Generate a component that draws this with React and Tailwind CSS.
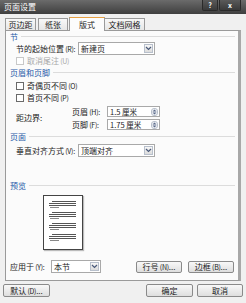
const Chevron = () => (
  <svg width="7" height="5" viewBox="0 0 7 5">
    <path d="M1 1 L3.5 3.5 L6 1" stroke="#4a5a7a" strokeWidth="1.2" fill="none" />
  </svg>
);

// chinese label + small latin access key
const Label = ({ text, keyName, colon = false }) => (
  <span className="whitespace-nowrap">
    {text}
    <span className="text-[7px] tracking-[-0.3px]"> ({keyName}){colon ? ":" : ""}</span>
  </span>
);

const Select = ({ value, width }) => (
  <div className={`flex h-[13px] shrink-0 items-center border border-[#a9a9a9] bg-white ${width}`}>
    <span className="flex-1 whitespace-nowrap pl-[2px]">{value}</span>
    <span className="m-[1px] flex h-[9px] w-[9px] items-center justify-center border border-[#b8c0cc] bg-gradient-to-b from-[#f7f7f7] to-[#dcdcdc]">
      <Chevron />
    </span>
  </div>
);

const Spin = ({ value }) => (
  <div className="flex h-[11px] w-[53px] shrink-0 items-center border border-[#a9a9a9] bg-white">
    <span className="flex-1 whitespace-nowrap pl-[2px] text-[7.5px]">{value}</span>
    <span className="mr-[1px] flex h-[8px] w-[7px] flex-col items-center justify-center rounded-[3px] border border-[#b8c0cc] bg-[#eef0f4]">
      <svg width="5" height="6" viewBox="0 0 5 6">
        <path d="M0.5 2.5 L2.5 0.5 L4.5 2.5 Z M0.5 3.5 L2.5 5.5 L4.5 3.5 Z" fill="#5a6a8a" />
      </svg>
    </span>
  </div>
);

const Header = ({ children, className = "" }) => (
  <div className={`flex h-[10px] shrink-0 items-center gap-[3px] text-[#1e5aa8] ${className}`}>
    <span className="whitespace-nowrap">{children}</span>
    <div className="h-[2px] flex-1 border-t border-[#dcdcdc] border-b-white" />
  </div>
);

const Check = ({ text, keyName, disabled, className = "" }) => (
  <div className={`flex h-[10px] shrink-0 items-center gap-[3px] pl-[6px] ${disabled ? "text-[#a8a8a8]" : ""} ${className}`}>
    <span className={`h-[8px] w-[8px] shrink-0 border bg-white ${disabled ? "border-[#c8c8c8]" : "border-[#6a6a6a]"}`} />
    <Label text={text} keyName={keyName} />
  </div>
);

const Button = ({ children, className = "" }) => (
  <div className={`flex h-[12px] shrink-0 items-center justify-center whitespace-nowrap rounded-[2px] border border-[#8a8a8a] bg-gradient-to-b from-[#f8f8f8] to-[#dedede] ${className}`}>
    {children}
  </div>
);

const PreviewPage = () => (
  <div className="flex h-[55px] w-[40px] flex-col gap-[4px] border border-[#444] bg-white px-[6px] pt-[5px] shadow-[1px_1px_1px_#bbb]">
    {[0, 1, 2, 3].map((i) => (
      <div key={i} className="flex flex-col items-end gap-[1px]">
        <div className="h-[1px] w-[24px] bg-[#555]" />
        <div className="h-[1px] w-[27px] bg-[#555]" />
        <div className="h-[1px] w-[27px] bg-[#555]" />
        <div className="h-[1px] w-[9px] self-start bg-[#888]" />
      </div>
    ))}
  </div>
);

const App = () => {
  return (
    <div
      className="flex h-[303px] w-[246px] flex-col overflow-hidden bg-[#f0f0f0] text-[8px] leading-none text-[#1a1a1a]"
      style={{ fontFamily: '"Noto Sans CJK SC", "Noto Sans", sans-serif' }}
    >
      {/* title bar */}
      <div className="flex h-[14px] shrink-0 items-center justify-between bg-gradient-to-b from-[#6b6b6b] to-[#3f3f3f] pl-[4px] pr-[5px]">
        <span className="text-white">页面设置</span>
        <div className="flex gap-[1px] self-start">
          <div className="flex h-[11px] w-[16px] items-center justify-center rounded-b-[2px] border border-t-0 border-[#2a2a2a] bg-gradient-to-b from-[#5a5a5a] to-[#3a3a3a] text-[7px] font-bold text-white">?</div>
          <div className="flex h-[11px] w-[22px] items-center justify-center rounded-b-[2px] border border-t-0 border-[#2a2a2a] bg-gradient-to-b from-[#5a5a5a] to-[#3a3a3a] text-[7px] font-bold text-white">x</div>
        </div>
      </div>

      {/* tabs */}
      <div className="mt-[3px] flex h-[13px] shrink-0 items-end pl-[5px]">
        <div className="flex h-[12px] w-[31px] items-center justify-center border border-b-0 border-[#9a9a9a] bg-gradient-to-b from-[#f8f8f8] to-[#e6e6e6]">页边距</div>
        <div className="ml-[2px] flex h-[12px] w-[30px] items-center justify-center border border-b-0 border-[#9a9a9a] bg-gradient-to-b from-[#f8f8f8] to-[#e6e6e6]">纸张</div>
        <div className="relative z-10 -mb-[1px] ml-[1px] flex h-[14px] w-[36px] items-center justify-center border border-b-0 border-[#9a9a9a] border-t-[#e8a040] bg-[#fcfcfc]">版式</div>
        <div className="flex h-[12px] w-[40px] items-center justify-center border border-b-0 border-l-0 border-[#9a9a9a] bg-gradient-to-b from-[#f8f8f8] to-[#e6e6e6]">文档网格</div>
      </div>

      {/* panel */}
      <div className="mx-[5px] flex h-[251px] shrink-0 flex-col border border-[#9a9a9a] border-r-[3px] border-r-[#a8a8a8] bg-[#fbfbfb] pl-[4px] pr-[3px]">
        <Header className="mt-[1px]">节</Header>
        <div className="flex h-[13px] shrink-0 items-center pl-[6px]">
          <div className="w-[62px]"><Label text="节的起始位置" keyName="R" colon /></div>
          <Select value="新建页" width="w-[77px]" />
        </div>
        <Check text="取消尾注" keyName="U" disabled className="mt-[1px]" />
        <Header className="mt-[2px]">页眉和页脚</Header>
        <Check text="奇偶页不同" keyName="O" className="mt-[3px]" />
        <Check text="首页不同" keyName="P" className="mt-[2px]" />
        <div className="mt-[3px] flex shrink-0 items-center pl-[6px]">
          <span className="w-[56px] whitespace-nowrap">距边界:</span>
          <div className="flex flex-col gap-[2px]">
            <div className="flex h-[11px] items-center">
              <div className="w-[35px]"><Label text="页眉" keyName="H" colon /></div>
              <Spin value="1.5 厘米" />
            </div>
            <div className="flex h-[11px] items-center">
              <div className="w-[35px]"><Label text="页脚" keyName="F" colon /></div>
              <Spin value="1.75 厘米" />
            </div>
          </div>
        </div>
        <Header className="mt-[2px]">页面</Header>
        <div className="mt-[2px] flex h-[13px] shrink-0 items-center pl-[6px]">
          <div className="w-[62px]"><Label text="垂直对齐方式" keyName="V" colon /></div>
          <Select value="顶端对齐" width="w-[77px]" />
        </div>
        <Header className="mt-[24px]">预览</Header>
        <div className="mt-[4px] shrink-0 pl-[33px]">
          <PreviewPage />
        </div>
        <div className="mt-[10px] flex h-[13px] shrink-0 items-center">
          <div className="w-[41px]"><Label text="应用于" keyName="Y" colon /></div>
          <Select value="本节" width="w-[50px]" />
          <div className="ml-auto flex gap-[6px] pr-[1px]">
            <Button className="w-[46px]"><Label text="行号" keyName="N" />...</Button>
            <Button className="w-[46px]"><Label text="边框" keyName="B" />...</Button>
          </div>
        </div>
      </div>

      {/* bottom buttons */}
      <div className="mt-[3px] flex items-center px-[3px]">
        <Button className="h-[13px] w-[47px]"><Label text="默认" keyName="D" />...</Button>
        <div className="ml-auto flex gap-[4px]">
          <Button className="h-[13px] w-[47px]">确定</Button>
          <Button className="h-[13px] w-[46px]">取消</Button>
        </div>
      </div>
    </div>
  );
};

export default App;
